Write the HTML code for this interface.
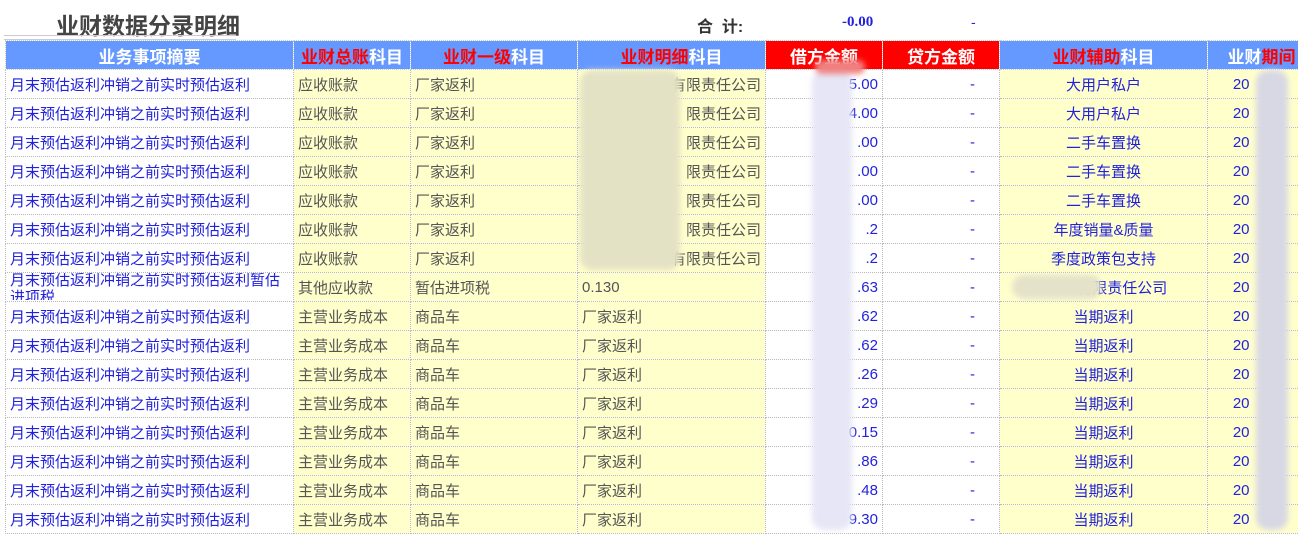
<!DOCTYPE html>
<html><head><meta charset="utf-8"><style>
body{margin:0;width:1298px;height:531px;overflow:hidden;background:#fff;font-family:"Liberation Sans","Noto Sans CJK SC",sans-serif;position:relative}
.t{position:absolute;left:5px;top:40px;border-collapse:collapse;table-layout:fixed;width:1310px}
td{border:1px dotted #b8b8b8;height:28px;padding:0 4px;font-size:15px;white-space:nowrap;overflow:hidden;color:#555;box-sizing:border-box}
th{height:28px;background:#6699ff;color:#fff;font-size:17px;font-weight:bold;border:1px dotted #ccc;padding:0;white-space:nowrap;overflow:hidden}
th.r{background:#ff0000}
th span{color:#f00}
tr{height:29px}
.w{background:#fff}.y{background:#ffffcc}
.b{color:#2222dd}
.c{text-align:center}.rt{text-align:right}.d{text-align:right;padding-right:24px}
.blur{position:absolute;filter:blur(3px);border-radius:12px}
.wr{height:28px;overflow:hidden;white-space:normal;line-height:17px;margin-top:-3px}
</style></head><body>
<div style="position:absolute;left:56px;top:7px;font-size:23px;font-weight:bold;color:#444">业财数据分录明细</div>
<div style="position:absolute;left:4px;top:35px;width:232px;height:3px;border-top:1px solid #ccc;border-bottom:1px solid #ccc"></div>
<div style="position:absolute;left:697px;top:13px;font-size:16px;font-weight:bold;color:#333">合&nbsp;&nbsp;计:</div>
<div style="position:absolute;left:842px;top:14px;font-size:15px;font-weight:bold;color:#2222dd;font-family:'Liberation Serif',serif">-0.00</div>
<div style="position:absolute;left:971px;top:14px;font-size:14px;color:#2222dd">-</div>
<table class="t">
<colgroup><col style="width:288px"><col style="width:117px"><col style="width:167px"><col style="width:188px"><col style="width:117px"><col style="width:117px"><col style="width:208px"><col style="width:108px"></colgroup>
<tr><th>业务事项摘要</th><th><span>业财总账</span>科目</th><th><span>业财一级</span>科目</th><th><span>业财明细</span>科目</th><th class="r">借方金额</th><th class="r">贷方金额</th><th><span>业财辅助</span>科目</th><th>业财<span>期间</span></th></tr>
<tr><td class="w b">月末预估返利冲销之前实时预估返利</td><td class="y">应收账款</td><td class="y">厂家返利</td><td class="y rt">有限责任公司</td><td class="w b rt">5.00</td><td class="w b d">-</td><td class="y b c">大用户私户</td><td class="y b">&nbsp;&nbsp;&nbsp;&nbsp;&nbsp;20</td></tr>
<tr><td class="w b">月末预估返利冲销之前实时预估返利</td><td class="y">应收账款</td><td class="y">厂家返利</td><td class="y rt">限责任公司</td><td class="w b rt">4.00</td><td class="w b d">-</td><td class="y b c">大用户私户</td><td class="y b">&nbsp;&nbsp;&nbsp;&nbsp;&nbsp;20</td></tr>
<tr><td class="w b">月末预估返利冲销之前实时预估返利</td><td class="y">应收账款</td><td class="y">厂家返利</td><td class="y rt">限责任公司</td><td class="w b rt">.00</td><td class="w b d">-</td><td class="y b c">二手车置换</td><td class="y b">&nbsp;&nbsp;&nbsp;&nbsp;&nbsp;20</td></tr>
<tr><td class="w b">月末预估返利冲销之前实时预估返利</td><td class="y">应收账款</td><td class="y">厂家返利</td><td class="y rt">限责任公司</td><td class="w b rt">.00</td><td class="w b d">-</td><td class="y b c">二手车置换</td><td class="y b">&nbsp;&nbsp;&nbsp;&nbsp;&nbsp;20</td></tr>
<tr><td class="w b">月末预估返利冲销之前实时预估返利</td><td class="y">应收账款</td><td class="y">厂家返利</td><td class="y rt">限责任公司</td><td class="w b rt">.00</td><td class="w b d">-</td><td class="y b c">二手车置换</td><td class="y b">&nbsp;&nbsp;&nbsp;&nbsp;&nbsp;20</td></tr>
<tr><td class="w b">月末预估返利冲销之前实时预估返利</td><td class="y">应收账款</td><td class="y">厂家返利</td><td class="y rt">限责任公司</td><td class="w b rt">.2</td><td class="w b d">-</td><td class="y b c">年度销量&amp;质量</td><td class="y b">&nbsp;&nbsp;&nbsp;&nbsp;&nbsp;20</td></tr>
<tr><td class="w b">月末预估返利冲销之前实时预估返利</td><td class="y">应收账款</td><td class="y">厂家返利</td><td class="y rt">有限责任公司</td><td class="w b rt">.2</td><td class="w b d">-</td><td class="y b c">季度政策包支持</td><td class="y b">&nbsp;&nbsp;&nbsp;&nbsp;&nbsp;20</td></tr>
<tr><td class="w b"><div class="wr">月末预估返利冲销之前实时预估返利暂估进项税</div></td><td class="y">其他应收款</td><td class="y">暂估进项税</td><td class="y">0.130</td><td class="w b rt">.63</td><td class="w b d">-</td><td class="y b c">&nbsp;&nbsp;&nbsp;&nbsp;&nbsp;&nbsp;&nbsp;&nbsp;&nbsp;有限责任公司</td><td class="y b">&nbsp;&nbsp;&nbsp;&nbsp;&nbsp;20</td></tr>
<tr><td class="w b">月末预估返利冲销之前实时预估返利</td><td class="y">主营业务成本</td><td class="y">商品车</td><td class="y">厂家返利</td><td class="w b rt">.62</td><td class="w b d">-</td><td class="y b c">当期返利</td><td class="y b">&nbsp;&nbsp;&nbsp;&nbsp;&nbsp;20</td></tr>
<tr><td class="w b">月末预估返利冲销之前实时预估返利</td><td class="y">主营业务成本</td><td class="y">商品车</td><td class="y">厂家返利</td><td class="w b rt">.62</td><td class="w b d">-</td><td class="y b c">当期返利</td><td class="y b">&nbsp;&nbsp;&nbsp;&nbsp;&nbsp;20</td></tr>
<tr><td class="w b">月末预估返利冲销之前实时预估返利</td><td class="y">主营业务成本</td><td class="y">商品车</td><td class="y">厂家返利</td><td class="w b rt">.26</td><td class="w b d">-</td><td class="y b c">当期返利</td><td class="y b">&nbsp;&nbsp;&nbsp;&nbsp;&nbsp;20</td></tr>
<tr><td class="w b">月末预估返利冲销之前实时预估返利</td><td class="y">主营业务成本</td><td class="y">商品车</td><td class="y">厂家返利</td><td class="w b rt">.29</td><td class="w b d">-</td><td class="y b c">当期返利</td><td class="y b">&nbsp;&nbsp;&nbsp;&nbsp;&nbsp;20</td></tr>
<tr><td class="w b">月末预估返利冲销之前实时预估返利</td><td class="y">主营业务成本</td><td class="y">商品车</td><td class="y">厂家返利</td><td class="w b rt">0.15</td><td class="w b d">-</td><td class="y b c">当期返利</td><td class="y b">&nbsp;&nbsp;&nbsp;&nbsp;&nbsp;20</td></tr>
<tr><td class="w b">月末预估返利冲销之前实时预估返利</td><td class="y">主营业务成本</td><td class="y">商品车</td><td class="y">厂家返利</td><td class="w b rt">.86</td><td class="w b d">-</td><td class="y b c">当期返利</td><td class="y b">&nbsp;&nbsp;&nbsp;&nbsp;&nbsp;20</td></tr>
<tr><td class="w b">月末预估返利冲销之前实时预估返利</td><td class="y">主营业务成本</td><td class="y">商品车</td><td class="y">厂家返利</td><td class="w b rt">.48</td><td class="w b d">-</td><td class="y b c">当期返利</td><td class="y b">&nbsp;&nbsp;&nbsp;&nbsp;&nbsp;20</td></tr>
<tr><td class="w b">月末预估返利冲销之前实时预估返利</td><td class="y">主营业务成本</td><td class="y">商品车</td><td class="y">厂家返利</td><td class="w b rt">9.30</td><td class="w b d">-</td><td class="y b c">当期返利</td><td class="y b">&nbsp;&nbsp;&nbsp;&nbsp;&nbsp;20</td></tr>
</table>
<div class="blur" style="left:580px;top:70px;width:100px;height:200px;background:#e4e2c4"></div>
<div class="blur" style="left:812px;top:70px;width:40px;height:460px;background:#e6e6f6"></div>
<div class="blur" style="left:815px;top:60px;width:50px;height:14px;background:#f08080"></div>
<div class="blur" style="left:1012px;top:275px;width:90px;height:24px;background:#e4e2c8"></div>
<div class="blur" style="left:1256px;top:70px;width:32px;height:460px;background:#d8d8e4"></div>
</body></html>
